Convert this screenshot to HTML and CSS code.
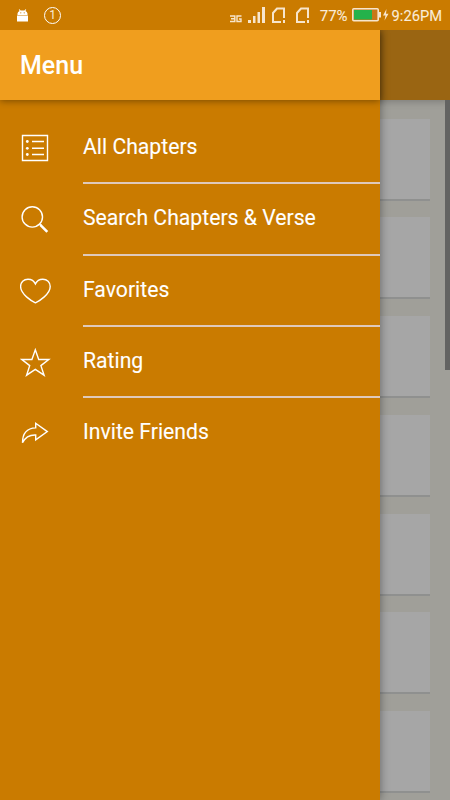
FILE: index.html
```html
<!DOCTYPE html>
<html lang="en">
<head>
<meta charset="utf-8">
<meta name="viewport" content="width=device-width">
<title>Menu</title>
<link rel="stylesheet" href="styles.css">
</head>
<body>
<header class="status">
  <svg class="android" width="12" height="14" viewBox="0 0 12 14"><path fill="#fff" d="M.5 7V5.500Q.8 3.500 2.500 3L1.800 1.600 2.500 1.200 3.600 2.600H7.400L8.500 1.200 9.200 1.600 8.500 3Q10.200 3.500 10.500 5.500V7ZM0 7.600H11V13.500H0Z"/><circle cx="3.800" cy="4.800" r=".6" fill="#ca7b00"/><circle cx="7.200" cy="4.800" r=".6" fill="#ca7b00"/></svg>
  <span class="notice">1</span>
  <div class="indicators">
    <svg class="network" width="12" height="8" viewBox="0 0 12 8" fill="none" stroke="#f7e5cc" stroke-width="1.400"><path d="M0 1H4.800V6.500H0M1 3.800H4.800M11.500 1H7V6.500H11V4H9"/></svg>
    <svg class="signal" width="18" height="17" viewBox="0 0 18 17" fill="#f7e5cc"><path d="M0 13H3V16H0ZM5 9H7.500V16H5ZM9.500 5H12V16H9.500ZM14 0H17V16H14Z"/></svg>
    <svg class="sim" width="14" height="17" viewBox="0 0 14 17" fill="none" stroke="#f7e5cc" stroke-width="2"><path d="M9 15H1V6L5 1.500H12V11M12 13V16"/></svg>
    <svg class="sim" width="14" height="17" viewBox="0 0 14 17" fill="none" stroke="#f7e5cc" stroke-width="2"><path d="M9 15H1V6L5 1.500H12V11M12 13V16"/></svg>
    <span class="percent">77%</span>
    <svg class="battery" width="38" height="14" viewBox="0 0 38 14"><rect x=".8" y=".8" width="25.400" height="12" rx="1" fill="#c87818" stroke="#f7e5cc" stroke-width="1.600"/><path fill="#24b24b" d="M2 2H20V11.500H2Z"/><path fill="#f7e5cc" d="M27 4H29V9.500H27ZM34.500 1L31 7.500H33.500L32.500 12.500 36.500 5.800H34Z"/></svg>
    <span class="time">9:26PM</span>
  </div>
</header>
<div class="screen">
  <main class="page">
    <div class="appbar"></div>
    <div class="cards">
      <div class="card"></div>
      <div class="card"></div>
      <div class="card"></div>
      <div class="card"></div>
      <div class="card"></div>
      <div class="card"></div>
      <div class="card"></div>
    </div>
    <div class="scrollbar"></div>
  </main>
  <aside class="drawer">
    <h1 class="title">Menu</h1>
    <nav class="menu">
      <a class="item">
        <svg class="icon" viewBox="0 0 32 32"><path d="M2.500 3.500H27.500V28.500H2.500ZM12 9.500H24M12 16.300H24M12 22.500H24"/><g class="dots"><circle cx="7.300" cy="9.500" r="1.400"/><circle cx="7.300" cy="16.300" r="1.400"/><circle cx="7.300" cy="22.500" r="1.400"/></g></svg>
        <span class="label">All Chapters</span>
      </a>
      <a class="item">
        <svg class="icon" viewBox="0 0 32 32"><circle cx="12.300" cy="12.900" r="10.200"/><path d="M19.500 19.900L21.200 21.600"/><path class="handle" d="M20.300 20.900L27.300 27.900"/></svg>
        <span class="label">Search Chapters &amp; Verse</span>
      </a>
      <a class="item">
        <svg class="icon" viewBox="0 0 32 32"><path d="M15.400 27.800C11.500 26 .600 19.200 .600 11.500.600 7.200 3.700 4.200 8 4.200 11.500 4.200 14.200 6.200 15.400 8.900 16.600 6.200 19.300 4.200 22.800 4.200 27.100 4.200 30.200 7.200 30.200 11.500 30.200 19.200 19.300 26 15.400 27.800Z"/></svg>
        <span class="label">Favorites</span>
      </a>
      <a class="item">
        <svg class="icon" viewBox="0 0 32 32"><path d="M15.300 3.800L18.700 13.500H28.800L20.900 19.600 24.100 29.200 15.300 23.300 6.600 29.200 9.700 19.600 1.900 13.500H11.900Z"/></svg>
        <span class="label">Rating</span>
      </a>
      <a class="item">
        <svg class="icon" viewBox="0 0 32 32"><path d="M2.500 25.800C2.500 15.800 7 11.200 15.700 10.900V6.300L27.300 14.600 15.700 22.800V18C9 17.700 5.200 20.300 2.500 25.800Z"/></svg>
        <span class="label">Invite Friends</span>
      </a>
    </nav>
  </aside>
</div>
</body>
</html>
```

FILE: styles.css
```css
* {
  box-sizing: border-box;
}

body {
  margin: 0;
  height: 800px;
  display: flex;
  flex-direction: column;
  overflow: hidden;
  font-family: Roboto, "Liberation Sans", sans-serif;
  color: #fff;
}

.status {
  height: 30px;
  flex: none;
  display: flex;
  align-items: center;
  padding: 0 8px 0 17px;
  background: #ca7b00;
  color: #faecd9;
}

.notice {
  width: 17px;
  height: 17px;
  margin-left: 15px;
  border: 1.5px solid #fff;
  border-radius: 50%;
  font-size: 12px;
  line-height: 15px;
  text-align: center;
}

.indicators {
  margin-left: auto;
  display: flex;
  align-items: center;
  font-size: 15px;
  -webkit-text-stroke: 0.1px;
}

.network {
  margin: 7px 6px 0 0;
}

.signal {
  margin-right: 6px;
}

.sim {
  margin-right: 9.5px;
}

.percent {
  margin: 2px 4px 0 0.5px;
}

.battery {
  margin-right: 2px;
}

.time {
  margin-top: 2px;
  font-size: 14.7px;
}

.screen {
  position: relative;
  flex: 1;
  overflow: hidden;
}

.page {
  height: 100%;
  display: flex;
  flex-direction: column;
  background: #a09f99;
}

.appbar {
  height: 70px;
  flex: none;
  background: #9a6512;
  box-shadow: 0 1px 8px rgba(0, 0, 0, 0.25);
}

.cards {
  display: flex;
  flex-direction: column;
  gap: 18.8px;
  padding: 18.5px 20px 0;
}

.card {
  height: 80px;
  flex: none;
  background: #a6a6a6;
  box-shadow: 0 2px 0 #8f908f;
}

.scrollbar {
  position: absolute;
  top: 70px;
  right: 0;
  width: 5px;
  height: 270px;
  background: #636362;
}

.drawer {
  position: absolute;
  inset: 0 auto 0 0;
  width: 380px;
  background: #ca7b00;
  box-shadow: 0 0 9px rgba(0, 0, 0, 0.4);
}

.title {
  height: 70px;
  margin: 0;
  padding-left: 20px;
  background: #f09e1e;
  box-shadow: 0 1px 7px rgba(0, 0, 0, 0.4);
  font-size: 25px;
  font-weight: 500;
  line-height: 71px;
}

.menu {
  padding-top: 13px;
}

.item {
  height: 71.3px;
  display: flex;
  align-items: center;
  padding-left: 20px;
}

.icon {
  width: 32px;
  height: 32px;
  margin: 0 31px 0.8px 0;
  fill: none;
  stroke: #fff;
  stroke-width: 1.4;
}

.dots {
  fill: #fff;
  stroke: none;
}

.handle {
  stroke-width: 2.6;
}

.label {
  flex: 1;
  height: 100%;
  border-bottom: 2px solid #dfc9bb;
  font-size: 21.2px;
  line-height: 68.8px;
  -webkit-text-stroke: 0.1px;
}

.item:last-child .label {
  border-bottom: 0;
}
```
